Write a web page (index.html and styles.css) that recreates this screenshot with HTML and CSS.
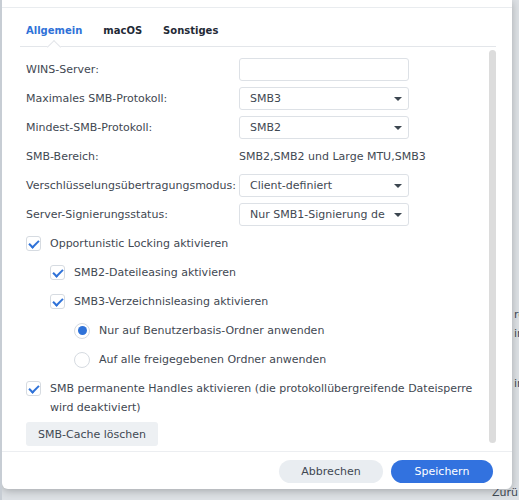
FILE: index.html
```html
<!DOCTYPE html>
<html lang="de">
<head>
  <meta charset="UTF-8">
  <title>SMB Erweiterte Einstellungen</title>
  <link rel="stylesheet" href="styles.css">
</head>
<body>
<div class="backdrop">
  <div class="backdrop-text t1">re</div>
  <div class="backdrop-text t2">ir</div>
  <div class="backdrop-text t3">ir</div>
  <div class="backdrop-text t4">Zurü</div>

  <div class="dialog">
    <div class="dialog-head"></div>

    <div class="tabs">
      <div class="tab active">Allgemein</div>
      <div class="tab">macOS</div>
      <div class="tab">Sonstiges</div>
    </div>

    <div class="dialog-body">
      <div class="content">
        <div class="form-row">
          <div class="form-label">WINS-Server:</div>
          <input type="text" class="form-control">
        </div>
        <div class="form-row">
          <div class="form-label">Maximales SMB-Protokoll:</div>
          <div class="select">SMB3</div>
        </div>
        <div class="form-row">
          <div class="form-label">Mindest-SMB-Protokoll:</div>
          <div class="select">SMB2</div>
        </div>
        <div class="form-row">
          <div class="form-label">SMB-Bereich:</div>
          <div class="form-value">SMB2,SMB2 und Large MTU,SMB3</div>
        </div>
        <div class="form-row">
          <div class="form-label">Verschlüsselungsübertragungsmodus:</div>
          <div class="select">Client-definiert</div>
        </div>
        <div class="form-row">
          <div class="form-label">Server-Signierungsstatus:</div>
          <div class="select">Nur SMB1-Signierung de</div>
        </div>

        <div class="check-row">
          <span class="checkbox checked"></span>
          <span>Opportunistic Locking aktivieren</span>
        </div>
        <div class="check-row indent-1">
          <span class="checkbox checked"></span>
          <span>SMB2-Dateileasing aktivieren</span>
        </div>
        <div class="check-row indent-1">
          <span class="checkbox checked"></span>
          <span>SMB3-Verzeichnisleasing aktivieren</span>
        </div>
        <div class="check-row indent-2">
          <span class="radio selected"></span>
          <span>Nur auf Benutzerbasis-Ordner anwenden</span>
        </div>
        <div class="check-row indent-2">
          <span class="radio"></span>
          <span>Auf alle freigegebenen Ordner anwenden</span>
        </div>
        <div class="check-row multi">
          <span class="checkbox checked"></span>
          <span>SMB permanente Handles aktivieren (die protokollübergreifende Dateisperre wird deaktiviert)</span>
        </div>

        <button class="btn-secondary">SMB-Cache löschen</button>
      </div>
      <div class="scrollbar"></div>
    </div>

    <div class="dialog-foot">
      <button class="btn-pill btn-cancel">Abbrechen</button>
      <button class="btn-pill btn-primary">Speichern</button>
    </div>
  </div>
</div>
</body>
</html>
```

FILE: styles.css
```css
* {
  margin: 0;
  padding: 0;
  box-sizing: border-box;
}

body {
  background-color: #dde1e5;
  font-family: "DejaVu Sans", Verdana, sans-serif;
  font-size: 11px;
  color: #3f4852;
  width: 519px;
  height: 500px;
  overflow: hidden;
}

.backdrop {
  position: relative;
  width: 519px;
  height: 500px;
  padding-left: 2px;
  border-left: 2px solid #c7cdd4;
  overflow: hidden;
}

.backdrop-text {
  position: absolute;
  left: 512px;
  color: #414b55;
}

.t1 { top: 308px; }
.t2 { top: 327px; }
.t3 { top: 377px; }
.t4 { top: 486px; left: 490px; }

.dialog {
  position: relative;
  width: 510px;
  height: 489px;
  margin-left: -2px;
  background-color: #fff;
  border-radius: 0 0 6px 6px;
  box-shadow: 0 2px 8px rgba(0, 0, 0, 0.25);
  display: flex;
  flex-direction: column;
}

.dialog-head {
  height: 8px;
  border-bottom: 1px solid #e9ecef;
}

.tabs {
  display: flex;
  gap: 21px;
  margin: 0 16px 0 18px;
  padding: 17px 0 0 6px;
  height: 39px;
  border-bottom: 1px solid #e3e6ea;
}

.tab {
  font-weight: bold;
  font-size: 10px;
  color: #1f2a36;
  position: relative;
  height: 21px;
}

.tab.active {
  color: #2f72d8;
}

.tab.active::after {
  content: "";
  position: absolute;
  left: 23px;
  bottom: -1px;
  width: 9px;
  height: 9px;
  background-color: #fff;
  border-left: 1px solid #e3e6ea;
  border-top: 1px solid #e3e6ea;
  transform: translateY(5px) rotate(45deg);
}

.dialog-body {
  flex: 1;
  display: flex;
  padding: 3px 0 0 24px;
  border-bottom: 1px solid #eceef1;
}

.content {
  flex: 1;
  padding-top: 8px;
}

.scrollbar {
  width: 7px;
  height: 393px;
  margin: 0 16px 0 0;
  background-color: #dcdcdc;
  border-radius: 4px;
}

.form-row {
  display: flex;
  align-items: center;
  height: 23px;
  margin-bottom: 6px;
}

.form-label {
  width: 213px;
  white-space: nowrap;
}

.form-control,
.select {
  width: 170px;
  height: 23px;
  border: 1px solid #dde1e6;
  border-radius: 3px;
  background-color: #fff;
  font-family: inherit;
  font-size: 11px;
  color: #3f4852;
}

.select {
  position: relative;
  padding: 0 22px 0 10px;
  line-height: 21px;
  white-space: nowrap;
  overflow: hidden;
}

.select::after {
  content: "";
  position: absolute;
  right: 6px;
  top: 9px;
  border-left: 4px solid transparent;
  border-right: 4px solid transparent;
  border-top: 4px solid #3c4650;
}

.check-row {
  display: flex;
  align-items: center;
  gap: 9px;
  height: 23px;
  margin-bottom: 6px;
}

.check-row.indent-1 {
  padding-left: 24px;
}

.check-row.indent-2 {
  padding-left: 48px;
}

.check-row.multi {
  align-items: flex-start;
  height: auto;
  line-height: 19px;
  padding-top: 2px;
  margin-bottom: 5px;
}

.check-row.multi .checkbox {
  margin-top: 2px;
}

.checkbox {
  flex: none;
  width: 15px;
  height: 15px;
  border: 1px solid #d6dbe1;
  border-radius: 3px;
  position: relative;
}

.checkbox.checked::after {
  content: "";
  position: absolute;
  left: 4px;
  top: 1px;
  width: 4px;
  height: 8px;
  border-right: 2px solid #2f72d8;
  border-bottom: 2px solid #2f72d8;
  transform: rotate(45deg);
}

.radio {
  flex: none;
  width: 16px;
  height: 16px;
  border: 1px solid #d6dbe1;
  border-radius: 50%;
  display: flex;
  align-items: center;
  justify-content: center;
}

.radio.selected::after {
  content: "";
  width: 9px;
  height: 9px;
  border-radius: 50%;
  background-color: #2f72d8;
}

.btn-secondary {
  width: 132px;
  height: 24px;
  border: none;
  border-radius: 3px;
  background-color: #edf0f3;
  font-family: inherit;
  font-size: 11px;
  color: #3f4852;
}

.dialog-foot {
  display: flex;
  justify-content: flex-end;
  gap: 8px;
  padding: 8px 19px 0 0;
  height: 37px;
}

.btn-pill {
  height: 23px;
  border: none;
  border-radius: 12px;
  font-family: inherit;
  font-size: 11px;
}

.btn-cancel {
  width: 104px;
  background-color: #e9edf1;
  color: #3f4852;
}

.btn-primary {
  width: 102px;
  background-color: #3272df;
  color: #fff;
}
```
